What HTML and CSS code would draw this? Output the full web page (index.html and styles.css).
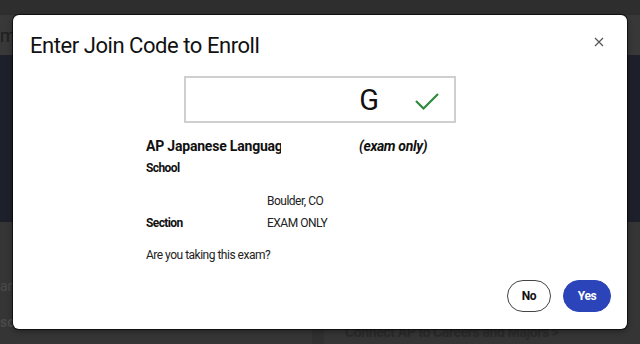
FILE: index.html
```html
<!DOCTYPE html>
<html lang="en">
<head>
    <meta charset="UTF-8">
    <meta name="viewport" content="width=device-width, initial-scale=1.0">
    <title>Enroll</title>
    <link rel="stylesheet" href="styles.css">
</head>
<body>
    <div class="page">
        <div class="topbar"></div>
        <div class="nav"><span class="nav-text">m</span></div>
        <div class="hero"></div>
        <div class="content">
            <div class="col-left">
                <p class="faint one">an</p>
                <p class="faint two">sc</p>
            </div>
            <div class="col-right">
                <p class="link">Connect AP to Careers and Majors &gt;</p>
            </div>
        </div>
    </div>

    <div class="modal">
        <div class="modal-head">
            <h1 class="title">Enter Join Code to Enroll</h1>
            <svg class="close" width="10" height="10" viewBox="0 0 10 10">
                <path d="M1 1 L9 9 M9 1 L1 9" stroke="#555" stroke-width="1.2"/>
            </svg>
        </div>

        <div class="code-box">
            <span class="code">G</span>
            <svg class="check" width="26" height="20" viewBox="0 0 26 20">
                <path d="M2 10 L9.5 17.5 L24 3" fill="none" stroke="#2c8a3a" stroke-width="2.2"/>
            </svg>
        </div>

        <div class="details">
            <div class="course">
                <span class="course-name"><span>AP Japanese Language</span></span>
                <span class="exam-only">(exam only)</span>
            </div>
            <div class="row">
                <span class="label">School</span>
                <span class="value"></span>
            </div>
            <div class="row tall">
                <span class="label"></span>
                <span class="value">Boulder, CO</span>
            </div>
            <div class="row">
                <span class="label">Section</span>
                <span class="value">EXAM ONLY</span>
            </div>
            <p class="question">Are you taking this exam?</p>
        </div>

        <div class="actions">
            <button class="btn btn-no">No</button>
            <button class="btn btn-yes">Yes</button>
        </div>
    </div>
</body>
</html>
```

FILE: styles.css
```css
body{
    margin: 0;
    font-family: Roboto, "Liberation Sans", sans-serif;
    background: #353535;
    height: 344px;
    overflow: hidden;
}
.page{
    display: flex;
    flex-direction: column;
}
.topbar{
    height: 15px;
    background: #2e2e2e;
}
.nav{
    height: 40px;
    background: #383838;
    display: flex;
    align-items: center;
}
.nav-text{
    color: #1e1e1e;
    font-size: 18px;
}
.hero{
    height: 167px;
    background: #1d1f2a;
}
.content{
    display: flex;
    height: 122px;
}
.col-left{
    width: 312px;
    border-right: 12px solid #303030;
}
.col-right{
    flex: 1;
}
.faint{
    margin: 0;
    color: #4a4a4a;
    font-size: 14px;
}
.faint.one{
    margin-top: 56px;
}
.faint.two{
    margin-top: 20px;
    font-weight: bold;
}
.link{
    margin: 102px 0 0 21px;
    color: #2a2a2a;
    font-weight: bold;
    font-size: 14px;
    letter-spacing: -0.4px;
}

.modal{
    position: absolute;
    left: 13px;
    top: 15px;
    width: 614px;
    height: 314px;
    box-sizing: border-box;
    background: #fff;
    border-radius: 6px;
    box-shadow: 0 0 0 1px rgba(0,0,0,0.6), 0 2px 6px rgba(0,0,0,0.4);
    padding: 0 16px 0 17px;
}
.modal-head{
    display: flex;
    justify-content: space-between;
    align-items: center;
    height: 61px;
}
.title{
    margin: 0;
    font-size: 22px;
    font-weight: 400;
    color: #111;
    letter-spacing: -0.45px;
}
.close{
    margin-right: 7px;
    margin-top: -8px;
}
.code-box{
    margin: 0 0 0 154px;
    width: 272px;
    height: 47px;
    box-sizing: border-box;
    border: 2px solid #cfcfcf;
    display: flex;
    align-items: center;
    justify-content: flex-end;
    padding-right: 14px;
}
.code{
    font-size: 29px;
    color: #111;
    margin-right: 35px;
}
.check{
    margin-top: 2px;
}
.details{
    margin-left: 116px;
    font-size: 12px;
    color: #222;
    letter-spacing: -0.5px;
}
.course{
    display: flex;
    align-items: center;
    margin-top: 16px;
    height: 14px;
}
.course-name{
    width: 213px;
    font-weight: bold;
    font-size: 14px;
    color: #111;
    letter-spacing: -0.2px;
}
.course-name span{
    display: block;
    width: 135px;
    overflow: hidden;
    white-space: nowrap;
}
.exam-only{
    font-weight: bold;
    font-style: italic;
    font-size: 14px;
    color: #111;
    letter-spacing: -0.35px;
}
.row{
    display: grid;
    grid-template-columns: 121px 1fr;
    height: 14px;
    margin-top: 8px;
}
.row.tall{
    margin-top: 19px;
}
.label{
    font-weight: bold;
    color: #111;
    letter-spacing: -0.6px;
}
.question{
    margin: 18px 0 0 0;
}
.actions{
    display: flex;
    justify-content: flex-end;
    gap: 12px;
    margin-top: 18px;
}
.btn{
    height: 32px;
    border-radius: 16px;
    font-family: Roboto, "Liberation Sans", sans-serif;
    font-size: 12px;
    font-weight: bold;
    padding: 0;
    letter-spacing: -0.4px;
}
.btn-no{
    width: 44px;
    background: #fff;
    border: 1px solid #444;
    color: #111;
}
.btn-yes{
    width: 48px;
    background: #2b44b9;
    border: 1px solid #2b44b9;
    color: #fff;
}
```
